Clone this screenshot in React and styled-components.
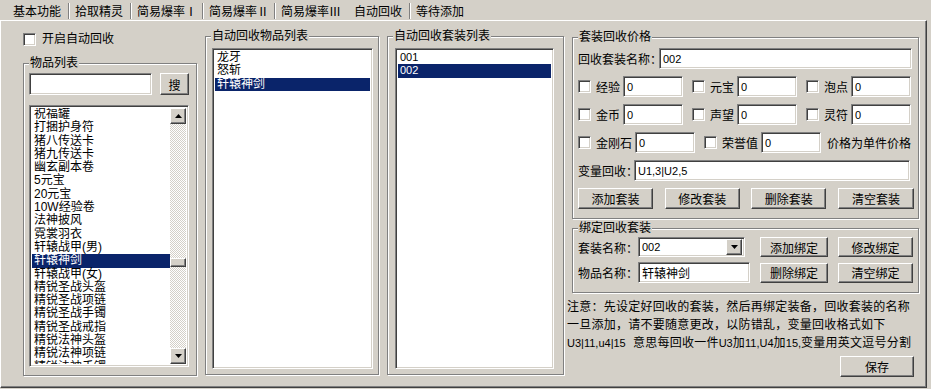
import React from "react";
import styled, { createGlobalStyle } from "styled-components";

const GlobalStyle = createGlobalStyle`
  html, body {
    margin: 0;
    padding: 0;
    background: #d4d0c8;
  }
  body {
    font-family: "Liberation Sans", "Noto Sans CJK SC", sans-serif;
    font-size: 12px;
    color: #000;
  }
  * {
    box-sizing: border-box;
  }
`;

const tabs = [
  { label: "基本功能", w: 62 },
  { label: "拾取精灵", w: 62 },
  { label: "简易爆率Ⅰ", w: 72 },
  { label: "简易爆率Ⅱ", w: 72 },
  { label: "简易爆率Ⅲ", w: 73 },
  { label: "自动回收", w: 62 },
  { label: "等待添加", w: 60 },
];
const ACTIVE_TAB = 5;

const allItems = [
  "祝福罐",
  "打捆护身符",
  "猪八传送卡",
  "猪九传送卡",
  "幽玄副本卷",
  "5元宝",
  "20元宝",
  "10W经验卷",
  "法神披风",
  "霓裳羽衣",
  "轩辕战甲(男)",
  "轩辕神剑",
  "轩辕战甲(女)",
  "精锐圣战头盔",
  "精锐圣战项链",
  "精锐圣战手镯",
  "精锐圣战戒指",
  "精锐法神头盔",
  "精锐法神项链",
  "精锐法神手镯",
];

const recycleItems = ["龙牙", "怒斩", "轩辕神剑"];
const suits = ["001", "002"];

const Arrow = ({ down }) => (
  <svg width="7" height="4" viewBox="0 0 7 4">
    {down ? <polygon points="0,0 7,0 3.5,4" fill="#000" /> : <polygon points="0,4 7,4 3.5,0" fill="#000" />}
  </svg>
);

const App = () => {
  return (
    <Window>
      <GlobalStyle />
      <TabStrip>
        {tabs.map((t, i) => (
          <Tab key={t.label} $w={t.w} $sep={i > 0 && i !== ACTIVE_TAB}>
            {t.label}
          </Tab>
        ))}
      </TabStrip>

      <Panel>
        <LeftCol>
          <CheckRow>
            <CheckBox />
            <span>开启自动回收</span>
          </CheckRow>
          <GroupBox $w={174} $h={313} $mt={17} $pad="9px 0 0 5px">
            <Legend>物品列表</Legend>
            <SearchRow>
              <TextBox $w={123} $h={22} />
              <Button $w={29} $h={22}>搜</Button>
            </SearchRow>
            <ListBox $w={160} $h={262} $mt={10}>
              <ListBody>
                {allItems.map((it) => (
                  <ListRow key={it} $sel={it === "轩辕神剑"}>
                    {it}
                  </ListRow>
                ))}
              </ListBody>
              <ScrollBar>
                <ScrollButton>
                  <Arrow />
                </ScrollButton>
                <Track>
                  <Thumb />
                </Track>
                <ScrollButton>
                  <Arrow down />
                </ScrollButton>
              </ScrollBar>
            </ListBox>
          </GroupBox>
        </LeftCol>

        <GroupBox $w={174} $h={339} $mt={15} $pad="11px 0 0 6px">
          <Legend>自动回收物品列表</Legend>
          <ListBox $w={161} $h={321}>
            <ListBody>
              {recycleItems.map((it) => (
                <ListRow key={it} $sel={it === "轩辕神剑"}>
                  {it}
                </ListRow>
              ))}
            </ListBody>
          </ListBox>
        </GroupBox>

        <GroupBox $w={177} $h={339} $mt={15} $pad="11px 0 0 7px">
          <Legend>自动回收套装列表</Legend>
          <ListBox $w={159} $h={321}>
            <ListBody>
              {suits.map((s) => (
                <ListRow key={s} $sel={s === "002"} $small>
                  {s}
                </ListRow>
              ))}
            </ListBody>
          </ListBox>
        </GroupBox>

        <RightCol>
          <GroupBox $w={347} $h={182} $pad="10px 4px 0 5px" $gap={7}>
            <Legend>套装回收价格</Legend>
            <Row>
              <FieldLabel $w={81}>回收套装名称：</FieldLabel>
              <TextBox $w={253} $h={21}>002</TextBox>
            </Row>
            <Row $gap={9}>
              <CheckItem label="经验" />
              <CheckItem label="元宝" />
              <CheckItem label="泡点" />
            </Row>
            <Row $gap={9}>
              <CheckItem label="金币" />
              <CheckItem label="声望" />
              <CheckItem label="灵符" />
            </Row>
            <Row $gap={9}>
              <CheckItem label="金刚石" />
              <CheckItem label="荣誉值" />
              <Hint>价格为单件价格</Hint>
            </Row>
            <Row>
              <FieldLabel $w={56}>变量回收：</FieldLabel>
              <TextBox $w={276} $h={21}>U1,3|U2,5</TextBox>
            </Row>
            <Row $between>
              <Button $w={75} $h={21}>添加套装</Button>
              <Button $w={75} $h={21}>修改套装</Button>
              <Button $w={75} $h={21}>删除套装</Button>
              <Button $w={76} $h={21}>清空套装</Button>
            </Row>
          </GroupBox>

          <GroupBox $w={347} $h={65} $mt={9} $pad="8px 4px 0 5px" $gap={5}>
            <Legend>绑定回收套装</Legend>
            <Row $gap={10}>
              <BindField>
                <FieldLabel $w={60}>套装名称：</FieldLabel>
                <ComboBox>
                  <ComboText>002</ComboText>
                  <DropButton>
                    <Arrow down />
                  </DropButton>
                </ComboBox>
              </BindField>
              <Button $w={68} $h={20}>添加绑定</Button>
              <Button $w={75} $h={20}>修改绑定</Button>
            </Row>
            <Row $gap={10}>
              <BindField>
                <FieldLabel $w={60}>物品名称：</FieldLabel>
                <TextBox $w={112} $h={21} $cjk>轩辕神剑</TextBox>
              </BindField>
              <Button $w={68} $h={20}>删除绑定</Button>
              <Button $w={75} $h={20}>清空绑定</Button>
            </Row>
          </GroupBox>

          <Notes>
            <div>注意：先设定好回收的套装，然后再绑定装备，回收套装的名称</div>
            <div>一旦添加，请不要随意更改，以防错乱，变量回收格式如下</div>
            <div>
              <Latin>U3|11,u4|15</Latin>&nbsp; 意思每回收一件<Latin>U3</Latin>加<Latin>11,U4</Latin>加
              <Latin>15,</Latin>变量用英文逗号分割
            </div>
          </Notes>

          <SaveRow>
            <Button $w={74} $h={21}>保存</Button>
          </SaveRow>
        </RightCol>
      </Panel>
    </Window>
  );
};

const CheckItem = ({ label }) => (
  <CheckItemWrap>
    <CheckBox />
    <ItemLabel>{label}</ItemLabel>
    <TextBox $w={60} $h={21}>0</TextBox>
  </CheckItemWrap>
);

export default App;

const Window = styled.div`
  width: 931px;
  height: 389px;
  overflow: hidden;
  background: #d4d0c8;
`;

const TabStrip = styled.div`
  display: flex;
  align-items: flex-start;
  height: 20px;
  padding: 3px 0 0 6px;
`;

const Tab = styled.div`
  width: ${(p) => p.$w}px;
  height: 16px;
  line-height: 16px;
  padding-left: 6px;
  font-family: "Noto Sans CJK SC", sans-serif;
  white-space: nowrap;
  flex-shrink: 0;
  border-left: 1px solid ${(p) => (p.$sep ? "#808080" : "transparent")};
  box-shadow: ${(p) => (p.$sep ? "inset 1px 0 0 #fff" : "none")};
`;

const Panel = styled.div`
  width: 927px;
  height: 368px;
  display: flex;
  align-items: flex-start;
  gap: 8px;
  padding-left: 22px;
  border-top: 1px solid #fff;
  border-left: 1px solid #fff;
  border-right: 1px solid #404040;
  border-bottom: 1px solid #404040;
  box-shadow: inset -1px -1px 0 #808080;
`;

const LeftCol = styled.div`
  width: 174px;
  margin-top: 12px;
  display: flex;
  flex-direction: column;
`;

const RightCol = styled.div`
  width: 347px;
  margin-top: 16px;
  display: flex;
  flex-direction: column;
`;

const CheckRow = styled.div`
  display: flex;
  align-items: center;
  gap: 6px;
  height: 13px;
  line-height: 13px;
`;

const CheckBox = styled.div`
  width: 13px;
  height: 13px;
  flex-shrink: 0;
  background: #fff;
  border: 1px solid;
  border-color: #808080 #fff #fff #808080;
  box-shadow: inset 1px 1px 0 #404040, inset -1px -1px 0 #d4d0c8;
`;

const GroupBox = styled.div`
  position: relative;
  width: ${(p) => p.$w}px;
  height: ${(p) => p.$h}px;
  margin-top: ${(p) => p.$mt || 0}px;
  padding: ${(p) => p.$pad};
  border: 1px solid #808080;
  box-shadow: inset 1px 1px 0 #fff, 1px 1px 0 #fff;
  display: flex;
  flex-direction: column;
  gap: ${(p) => p.$gap || 0}px;
  flex-shrink: 0;
`;

const Legend = styled.span`
  position: absolute;
  top: -8px;
  left: 5px;
  padding: 0 1px;
  line-height: 14px;
  background: #d4d0c8;
  white-space: nowrap;
`;

const SearchRow = styled.div`
  display: flex;
  gap: 8px;
`;

const sunken = `
  background: #fff;
  border: 1px solid;
  border-color: #808080 #fff #fff #808080;
  box-shadow: inset 1px 1px 0 #404040, inset -1px -1px 0 #d4d0c8;
`;

const raised = `
  background: #d4d0c8;
  border: 1px solid;
  border-color: #fff #404040 #404040 #fff;
  box-shadow: inset -1px -1px 0 #808080;
`;

const TextBox = styled.div`
  ${sunken}
  width: ${(p) => p.$w}px;
  height: ${(p) => p.$h}px;
  flex-shrink: 0;
  display: flex;
  align-items: center;
  padding-left: 3px;
  font-size: ${(p) => (p.$cjk ? 12 : 11)}px;
  white-space: nowrap;
  overflow: hidden;
`;

const Button = styled.div`
  ${raised}
  width: ${(p) => p.$w}px;
  height: ${(p) => p.$h}px;
  flex-shrink: 0;
  display: flex;
  align-items: center;
  justify-content: center;
  font-size: 12px;
  white-space: nowrap;
`;

const ListBox = styled.div`
  ${sunken}
  width: ${(p) => p.$w}px;
  height: ${(p) => p.$h}px;
  margin-top: ${(p) => p.$mt || 0}px;
  padding: 2px;
  display: flex;
`;

const ListBody = styled.div`
  flex: 1;
  overflow: hidden;
`;

const ListRow = styled.div`
  height: 13.3px;
  line-height: 13.3px;
  padding-left: 2px;
  white-space: nowrap;
  font-size: ${(p) => (p.$small ? 11 : 12)}px;
  background: ${(p) => (p.$sel ? "#0a246a" : "transparent")};
  color: ${(p) => (p.$sel ? "#fff" : "#000")};
`;

const ScrollBar = styled.div`
  width: 16px;
  display: flex;
  flex-direction: column;
`;

const ScrollButton = styled.div`
  ${raised}
  height: 16px;
  display: flex;
  align-items: center;
  justify-content: center;
`;

const Track = styled.div`
  flex: 1;
  background-image: conic-gradient(#fff 25%, #d4d0c8 0 50%, #fff 0 75%, #d4d0c8 0);
  background-size: 2px 2px;
`;

const Thumb = styled.div`
  ${raised}
  height: 9px;
  margin-top: 134px;
`;

const Row = styled.div`
  display: flex;
  align-items: center;
  gap: ${(p) => p.$gap || 0}px;
  justify-content: ${(p) => (p.$between ? "space-between" : "flex-start")};
  min-height: 20px;
`;

const FieldLabel = styled.span`
  width: ${(p) => p.$w}px;
  flex-shrink: 0;
  white-space: nowrap;
`;

const CheckItemWrap = styled.div`
  display: flex;
  align-items: center;
`;

const ItemLabel = styled.span`
  margin: 0 3px 0 5px;
  white-space: nowrap;
`;

const Hint = styled.span`
  margin-left: -3px;
  white-space: nowrap;
`;

const BindField = styled.div`
  width: 172px;
  display: flex;
  align-items: center;
`;

const ComboBox = styled.div`
  ${sunken}
  width: 107px;
  height: 20px;
  padding: 2px;
  display: flex;
  align-items: center;
`;

const ComboText = styled.span`
  flex: 1;
  padding-left: 1px;
  font-size: 11px;
`;

const DropButton = styled.div`
  ${raised}
  width: 16px;
  height: 16px;
  display: flex;
  align-items: center;
  justify-content: center;
`;

const Notes = styled.div`
  margin: 5px 0 0 -5px;
  line-height: 18px;
  letter-spacing: 0.25px;
  white-space: nowrap;
`;

const Latin = styled.span`
  font-size: 11px;
  letter-spacing: 0;
`;

const SaveRow = styled.div`
  display: flex;
  justify-content: flex-end;
  padding-right: 5px;
  margin-top: 4px;
`;
